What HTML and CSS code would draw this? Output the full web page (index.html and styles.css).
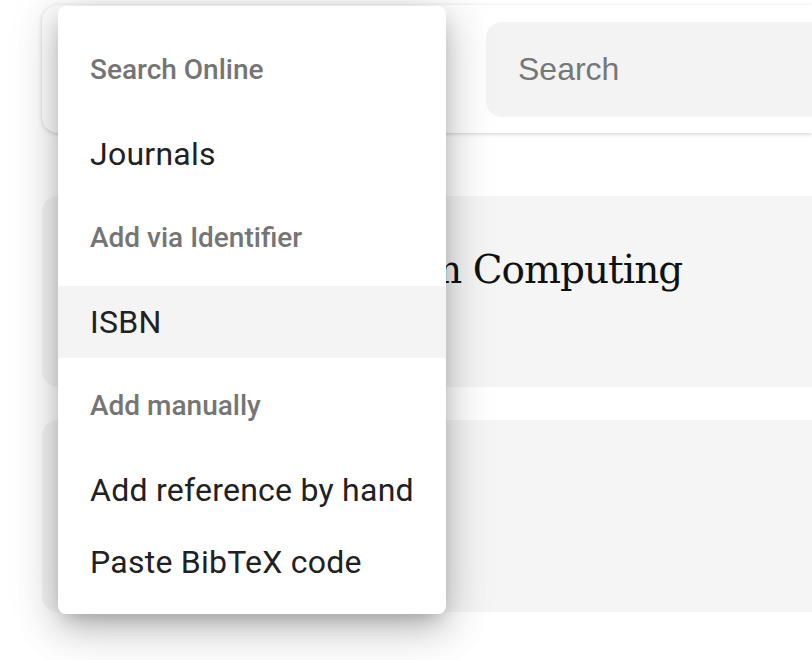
FILE: index.html
```html
<!DOCTYPE html>
<html lang="en">
  <head>
    <meta charset="UTF-8" />
    <meta name="viewport" content="width=device-width, initial-scale=1.0" />
    <title>References</title>
    <link rel="stylesheet" href="styles.css">
  </head>
  <body>
    <div id="page">
      <!-- top toolbar: add button (under the menu) + search -->
      <header class="toolbar">
        <div class="toolbar-btn"></div>
        <div class="search">
          <input type="text" placeholder="Search" />
        </div>
      </header>

      <section class="refs">
        <article class="ref-card">
          <div class="ref-thumb"></div>
          <h2 class="ref-title">Quantum Computing</h2>
        </article>
        <article class="ref-card"></article>
      </section>
    </div>

    <!-- add reference menu, opened -->
    <nav class="menu">
      <div class="menu-head">Search Online</div>
      <a href="javascript:;" class="menu-item">Journals</a>
      <div class="menu-head">Add via Identifier</div>
      <a href="javascript:;" class="menu-item on">ISBN</a>
      <div class="menu-head">Add manually</div>
      <a href="javascript:;" class="menu-item">Add reference by hand</a>
      <a href="javascript:;" class="menu-item">Paste BibTeX code</a>
    </nav>
  </body>
</html>
```

FILE: styles.css
```css
* {
  margin: 0;
  padding: 0;
  box-sizing: border-box;
  text-decoration: none;
}
html,
body {
  height: 100%;
  overflow: hidden;
}
body {
  background: #fff;
  font-family: Roboto, "Liberation Sans", sans-serif;
}
#page {
  padding: 5px 0 0 42px;
}
.toolbar {
  display: flex;
  height: 128px;
  padding: 17px 0 16px 0;
  background: #fff;
  border-radius: 16px 0 0 16px;
  box-shadow: 0 1px 4px rgba(0, 0, 0, 0.18);
}
.toolbar-btn {
  width: 444px;
  flex: none;
}
.search {
  flex: 1;
  background: #f3f3f3;
  border-radius: 16px 0 0 16px;
  display: flex;
  align-items: center;
  padding-left: 32px;
}
.search input {
  border: none;
  outline: none;
  background: transparent;
  width: 100%;
  font-family: "Liberation Sans", Arial, sans-serif;
  font-size: 32px;
  color: #333;
}
.search input::placeholder {
  color: #777;
}
.refs {
  display: flex;
  flex-direction: column;
  gap: 33px;
  margin-top: 63px;
}
.ref-card {
  height: 191px;
  background: #f5f5f5;
  border-radius: 16px 0 0 16px;
  display: flex;
  padding: 48px 0 0 32px;
}
.ref-card + .ref-card {
  height: 192px;
}
.ref-thumb {
  width: 211px;
  height: 96px;
  flex: none;
}
.ref-title {
  font-family: "DejaVu Serif", "Liberation Serif", serif;
  font-weight: normal;
  font-size: 39px;
  line-height: 52px;
  color: #111;
  letter-spacing: -1px;
  white-space: nowrap;
}
.menu {
  position: absolute;
  left: 58px;
  top: 6px;
  width: 388px;
  padding: 16px 0;
  background: #fff;
  border-radius: 8px;
  box-shadow: 0 10px 20px -8px rgba(0, 0, 0, 0.28),
    0 16px 40px 2px rgba(0, 0, 0, 0.15), 0 6px 50px 6px rgba(0, 0, 0, 0.1);
}
.menu-head {
  height: 96px;
  display: flex;
  align-items: center;
  padding-left: 32px;
  font-size: 28px;
  line-height: 36px;
  font-weight: 500;
  color: #757575;
}
.menu-item {
  display: block;
  height: 72px;
  line-height: 72px;
  padding-left: 32px;
  font-size: 32px;
  letter-spacing: 0.25px;
  color: #212121;
  white-space: nowrap;
}
.menu-item.on {
  background: #f4f4f4;
}
```
